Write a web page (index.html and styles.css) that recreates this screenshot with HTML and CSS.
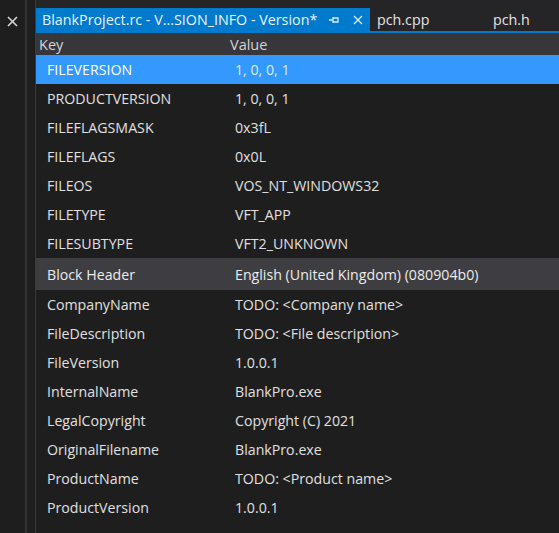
FILE: index.html
```html
<!DOCTYPE html>
<html lang="en">
<head>
  <meta charset="UTF-8">
  <title>BlankProject.rc - VS_VERSION_INFO - Version</title>
  <link rel="stylesheet" href="styles.css">
</head>
<body>
  <div class="frame">
    <div class="side">
      <svg class="side-close" width="11" height="11" viewBox="0 0 11 11">
        <path d="M1 1l9 9M10 1l-9 9" stroke="#d6d6d6" stroke-width="1.6"/>
      </svg>
    </div>
    <div class="gutter"></div>

    <div class="main">
      <div class="tabs">
        <div class="tab active">
          <span class="tab-title">BlankProject.rc - V...SION_INFO - Version*</span>
          <svg class="pin" width="12" height="10" viewBox="0 0 12 10">
            <path d="M1 5h4M5 2v6M5 3h5v4H5" fill="none" stroke="#d8ecff" stroke-width="1.3"/>
          </svg>
          <svg class="tab-close" width="10" height="10" viewBox="0 0 10 10">
            <path d="M1 1l8 8M9 1l-8 8" stroke="#d8ecff" stroke-width="1.4"/>
          </svg>
        </div>
        <div class="tab">pch.cpp</div>
        <div class="tab">pch.h</div>
      </div>
      <div class="tab-line"></div>

      <div class="grid-head">
        <div class="col-key">Key</div>
        <div class="col-val">Value</div>
      </div>

      <div class="row selected"><div class="col-key">FILEVERSION</div><div class="col-val">1, 0, 0, 1</div></div>
      <div class="row"><div class="col-key">PRODUCTVERSION</div><div class="col-val">1, 0, 0, 1</div></div>
      <div class="row"><div class="col-key">FILEFLAGSMASK</div><div class="col-val">0x3fL</div></div>
      <div class="row"><div class="col-key">FILEFLAGS</div><div class="col-val">0x0L</div></div>
      <div class="row"><div class="col-key">FILEOS</div><div class="col-val">VOS_NT_WINDOWS32</div></div>
      <div class="row"><div class="col-key">FILETYPE</div><div class="col-val">VFT_APP</div></div>
      <div class="row"><div class="col-key">FILESUBTYPE</div><div class="col-val">VFT2_UNKNOWN</div></div>

      <div class="row block"><div class="col-key">Block Header</div><div class="col-val">English (United Kingdom) (080904b0)</div></div>

      <div class="row"><div class="col-key">CompanyName</div><div class="col-val">TODO: &lt;Company name&gt;</div></div>
      <div class="row"><div class="col-key">FileDescription</div><div class="col-val">TODO: &lt;File description&gt;</div></div>
      <div class="row"><div class="col-key">FileVersion</div><div class="col-val">1.0.0.1</div></div>
      <div class="row"><div class="col-key">InternalName</div><div class="col-val">BlankPro.exe</div></div>
      <div class="row"><div class="col-key">LegalCopyright</div><div class="col-val">Copyright (C) 2021</div></div>
      <div class="row"><div class="col-key">OriginalFilename</div><div class="col-val">BlankPro.exe</div></div>
      <div class="row"><div class="col-key">ProductName</div><div class="col-val">TODO: &lt;Product name&gt;</div></div>
      <div class="row"><div class="col-key">ProductVersion</div><div class="col-val">1.0.0.1</div></div>
    </div>
  </div>
</body>
</html>
```

FILE: styles.css
```css
html, body {
  margin: 0;
  height: 100%;
  overflow: hidden;
}

body {
  background: #1f1f21;
  font-family: "Open Sans", "Noto Sans", sans-serif;
  font-size: 14.2px;
  color: #e0e0e0;
}

.frame {
  display: flex;
  height: 533px;
}

/* panneau gauche */
.side {
  width: 25px;
  border-right: 2px solid #333336;
  background: #1e1e1f;
  display: flex;
  justify-content: center;
}

.side-close {
  margin-top: 16px;
}

.gutter {
  width: 8px;
  background: #1e1e1f;
}

.main {
  flex: 1;
  border-left: 1px solid #3a3a3d;
  background: #1e1e1e;
}

/* onglets */
.tabs {
  display: flex;
  height: 23px;
  padding-top: 8px;
  background: #252527;
}

.tab {
  display: flex;
  align-items: center;
  padding: 0 7px;
  font-size: 14.3px;
  color: #e4e4e4;
}

.tab.active {
  width: 321px;
  padding-left: 6px;
  background: #007acc;
  color: #eaf4ff;
}

.tab-title {
  flex: 1;
  white-space: nowrap;
}

.pin {
  margin-right: 13px;
}

.tab:nth-child(2) {
  width: 102px;
}

.tab-line {
  height: 2px;
  background: #007acc;
}

/* grille */
.grid-head {
  display: flex;
  height: 22px;
  align-items: center;
  background: #37373b;
  color: #d4d4d4;
  font-size: 14.5px;
}

.grid-head .col-key {
  width: 188px;
  padding-left: 3px;
}

.grid-head .col-val {
  padding-left: 3px;
}

.row {
  display: flex;
  height: 29px;
  align-items: center;
}

.row .col-key {
  width: 177px;
  padding-left: 11px;
}

.row .col-val {
  padding-left: 11px;
}

.row.selected {
  background: #3399ff;
  color: #ffffff;
}

.row.selected .col-val {
  color: #d9ecff;
}

.row.block {
  height: 32px;
  background: #3d3d42;
  color: #ececec;
}
```
